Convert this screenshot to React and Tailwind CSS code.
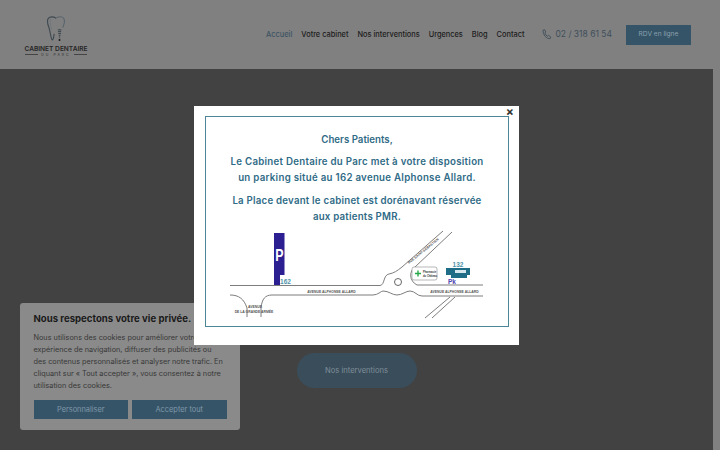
const font = { fontFamily: '"Inter", "Liberation Sans", sans-serif' };

function Tooth() {
  return (
    <svg width="20" height="27" viewBox="0 0 22 30" fill="none" className="block">
      <path d="M11 3.5C8 1.5 3.5 1.2 2 4.5 C0.5 8 2.5 12 3.5 15 C4.5 19 5 24 6.5 27.5 C8 28.5 8.5 24 9 21" stroke="#3f4a52" strokeWidth="1.3" />
      <path d="M11 3.5C14 1.5 18.5 1.2 20 4.5 C21.5 8 19.5 11 18.5 14" stroke="#59646c" strokeWidth="1.2" />
      <path d="M5 4 C4 8 5 12 6 16" stroke="#68737b" strokeWidth="0.8" />
      <path d="M13 16.5h4M13.3 18.5h3.4M13.6 20.5h2.8M14 22.5h2M14.3 24.5h1.4" stroke="#2f3a42" strokeWidth="1" />
      <rect x="14" y="26.5" width="1.8" height="2.4" fill="#222" />
    </svg>
  );
}

function PhoneIcon() {
  return (
    <svg width="10" height="11" viewBox="0 0 10 11" fill="none">
      <path d="M1 1.2 L2.7 0.8 L3.8 3 L2.8 4 C3.3 5.5 4.2 6.6 5.5 7.3 L6.6 6.4 L8.8 8 L8.2 9.6 C4.5 10 1 6 1 1.2Z" stroke="#3f4f5b" strokeWidth="0.9" strokeLinejoin="round" />
    </svg>
  );
}

function ParkingMap() {
  const road = { stroke: '#7d7d7d', strokeWidth: 1, fill: 'none' };
  const label = { fontFamily: 'Liberation Sans', fontWeight: 700, fill: '#555', fontSize: 3.4 };
  return (
    <svg width="262" height="92" viewBox="0 0 262 92" className="block overflow-visible">
      <rect x="43" y="0" width="10.5" height="52" fill="#2b1f92" />
      <text transform="translate(48.3 28) scale(0.75 1)" textAnchor="middle" fontSize="16.5" fontWeight="700" fill="#fff" fontFamily="Liberation Sans">P</text>
      <rect x="49" y="42" width="11" height="10" fill="#fff" />
      <text x="54.5" y="50.5" textAnchor="middle" fontSize="6.5" fill="#4f93a8" fontFamily="Liberation Sans">162</text>
      <path d="M-1 52.5 H149 C154 52 152 42 158 41 C163 40 166 38 171 34 L212 -2" {...road} />
      <path d="M221 -1 L184 34 C178 38 178 48 186 52 H252" {...road} />
      <path d="M41 62 H142 C147 62 150 58 152 58 C158 58 161 62 166 62 C171 62 175 58 179 58 C184 58 186 63 191 63 H252" {...road} />
      <path d="M-1 62 C8 62 13 66 16 75 L16 84" {...road} />
      <path d="M41 62 C34 62 31 66 30 75 L30 84" {...road} />
      <path d="M194 85 L219 64 M201 85 L224 64" {...road} />
      <circle cx="167" cy="49" r="3.5" fill="#fff" stroke="#666" strokeWidth="1" />
      <text transform="translate(178 31) rotate(-39)" {...label}>RUE SAINT-SÉBASTIEN</text>
      <text x="100.5" y="59.5" textAnchor="middle" {...label}>AVENUE ALPHONSE ALLARD</text>
      <text x="223.5" y="59.5" textAnchor="middle" {...label}>AVENUE ALPHONSE ALLARD</text>
      <text x="24" y="75" textAnchor="middle" {...label}>AVENUE</text>
      <text x="23" y="79.5" textAnchor="middle" {...label}>DE LA GRANDE ARMÉE</text>
      <rect x="181" y="34" width="25" height="13" rx="2" fill="#fff" stroke="#999" strokeWidth="0.7" />
      <path d="M184 40.5h6M187 37.5v6" stroke="#2aa84a" strokeWidth="1.4" />
      <text x="192" y="40" fontSize="2.6" fill="#333" fontFamily="Liberation Sans">Pharmacie</text>
      <text x="192" y="43.5" fontSize="2.6" fill="#333" fontFamily="Liberation Sans">du Château</text>
      <text x="227" y="33.5" textAnchor="middle" fontSize="6.5" fill="#4f93a8" fontFamily="Liberation Sans">132</text>
      <path d="M215 35h24v7h-3v3h-16v-3h-5z" fill="#1f6c86" />
      <rect x="224" y="37" width="11" height="3" fill="#d6e7ee" />
      <text x="217" y="51" fontSize="6.5" fill="#4b3fb0" fontFamily="Liberation Sans">Pk</text>
    </svg>
  );
}

export default function App() {
  return (
    <div style={font} className="relative h-[450px] w-[720px] overflow-hidden bg-[#808080] text-[#1c1c1c]">
      <header className="flex h-[69px] items-center pl-[25px] pr-[29px]">
        <div className="flex w-[62px] flex-col items-center pt-[2px]">
          <Tooth />
          <div className="mt-[4px] whitespace-nowrap text-[6.6px] font-semibold leading-[7px] text-[#262626]">CABINET DENTAIRE</div>
          <div className="flex w-full items-center gap-[3px] text-[3.5px] leading-[4px] tracking-[2px] text-[#333]">
            <span className="h-px flex-1 bg-[#444]" />
            <span>DU PARC</span>
            <span className="h-px flex-1 bg-[#444]" />
          </div>
        </div>
        <nav className="ml-auto flex items-center gap-[9px] text-[7.4px] font-medium">
          <span className="text-[#3e5464]">Accueil</span>
          <span>Votre cabinet</span>
          <span>Nos interventions</span>
          <span>Urgences</span>
          <span>Blog</span>
          <span>Contact</span>
        </nav>
        <div className="ml-[18px] flex items-center gap-[3px] text-[8.5px] text-[#3f4f5b]">
          <PhoneIcon />
          <span>02 / 318 61 54</span>
        </div>
        <div className="ml-[14px] flex h-[20px] w-[65px] items-center justify-center bg-[#365468] text-[6.6px] text-[#8aa0ae]">RDV en ligne</div>
      </header>
      <div className="flex h-[381px]">
        <main className="relative flex flex-1 flex-col items-center justify-end bg-[#424242] pb-[62px]">
          <div className="flex h-[35px] w-[120px] items-center justify-center rounded-full bg-[#3a4d5b] text-[7.6px] text-[#7e8e99]">Nos interventions</div>
        </main>
        <div className="w-[7px] bg-[#808080]" />
      </div>

      <section className="absolute left-[20px] top-[303px] w-[220px] rounded-[3px] bg-[#8a8a8a] px-[13.5px] pb-[11px] pt-[10px]">
        <h2 className="text-[9.6px] font-bold leading-[12px] text-[#1a1a1a]">Nous respectons votre vie privée.</h2>
        <p className="mt-[7px] whitespace-nowrap text-[7.3px] leading-[12px] text-[#383838]">
          Nous utilisons des cookies pour améliorer votre<br />
          expérience de navigation, diffuser des publicités ou<br />
          des contenus personnalisés et analyser notre trafic. En<br />
          cliquant sur « Tout accepter », vous consentez à notre<br />
          utilisation des cookies.
        </p>
        <div className="mt-[8px] flex gap-[4px]">
          <div className="flex h-[19px] flex-1 items-center justify-center bg-[#365468] text-[7.4px] text-[#7f98a8]">Personnaliser</div>
          <div className="flex h-[19px] flex-1 items-center justify-center bg-[#365468] text-[7.4px] text-[#7f98a8]">Accepter tout</div>
        </div>
      </section>

      <section className="absolute left-[194px] top-[106px] h-[239px] w-[325px] bg-white pl-[11px] pr-[10px] pt-[10px]">
        <span className="absolute right-[5px] top-[1px] text-[12px] font-bold leading-[10px] text-[#333]">×</span>
        <div className="flex h-[211px] w-[304px] flex-col items-center border-[1.5px] border-[#4d8797] pt-[15px] text-center text-[9.7px] font-semibold leading-[16px] text-[#2f6b86]">
          <p>Chers Patients,</p>
          <p className="mt-[6px] tracking-[0.28px]">Le Cabinet Dentaire du Parc met à votre disposition<br />un parking situé au 162 avenue Alphonse Allard.</p>
          <p className="mt-[7px] tracking-[0.22px]">La Place devant le cabinet est dorénavant réservée<br />aux patients PMR.</p>
          <div className="mt-[8px] self-start pl-[25px]">
            <ParkingMap />
          </div>
        </div>
      </section>
    </div>
  );
}
